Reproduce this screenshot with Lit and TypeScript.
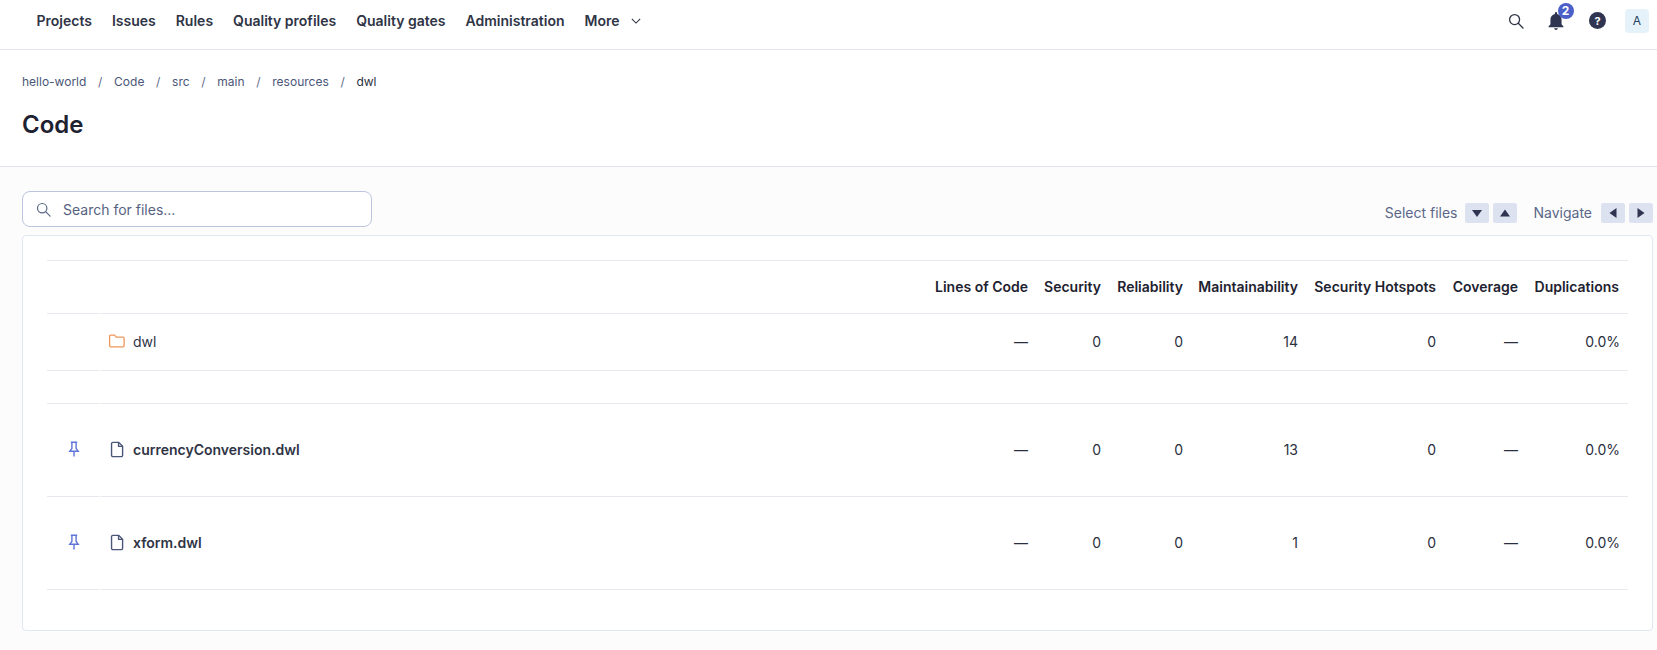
import { LitElement, html, css, svg } from "lit";
import { customElement } from "lit/decorators.js";

const COLS = ["Lines of Code", "Security", "Reliability", "Maintainability", "Security Hotspots", "Coverage", "Duplications"];

const pin = svg`<svg class="ico" width="16" height="16" viewBox="0 0 16 16" fill="none" stroke="#5f74d8" stroke-width="1.400"><path d="M4.800 1.200h6.400M5.900 1.200v6.200L3.800 10.200h8.400L10.100 7.400V1.200M8 10.200V15.500"/></svg>`;
const file = svg`<svg class="ico" width="17" height="17" viewBox="0 0 16 16" fill="none" stroke="#4a5678" stroke-width="1.300" stroke-linejoin="round"><path d="M3.600 1.300h5.600l3.600 3.600v8.600a1.200 1.200 0 0 1-1.200 1.200H3.600a1.200 1.200 0 0 1-1.200-1.200V2.500a1.200 1.200 0 0 1 1.200-1.200Z"/><path d="M9 1.400v3.700h3.700"/></svg>`;
const folder = svg`<svg class="ico" width="18" height="16" viewBox="0 0 18 16" fill="none" stroke="#f0965a" stroke-width="1.300" stroke-linejoin="round"><path d="M1.600 3.200a1 1 0 0 1 1-1h4l1.600 2h6.900a1 1 0 0 1 1 1v7.600a1 1 0 0 1-1 1H2.600a1 1 0 0 1-1-1Z"/></svg>`;
const search = (c: string, w = 15) => svg`<svg width="${w}" height="${w}" viewBox="0 0 16 16" fill="none" stroke="${c}" stroke-width="1.300" stroke-linecap="round"><circle cx="6.600" cy="6.600" r="5"/><path d="M10.300 10.300 15 15"/></svg>`;
const tri = (d: string) => svg`<svg width="12" height="12" viewBox="0 0 12 12" fill="#2f3550"><path d="${d}"/></svg>`;

@customElement("app-root")
export class AppRoot extends LitElement {
  static styles = css`
    :host { display: block; font-family: Inter, "Liberation Sans", sans-serif; font-size: 14px; color: #2a2f40; background: #fcfcfd; height: 650px; overflow: hidden; }
    .nav { background: #fff; border-bottom: 1px solid #e4e5f2; display: flex; align-items: center; padding: 0 8px 8px 36.5px; box-sizing: content-box; height: 41px; }
    .links { display: flex; gap: 20px; font-weight: 600; color: #2f3445; align-items: center; }
    .more { display: flex; align-items: center; gap: 11px; }
    .right { margin-left: auto; display: flex; align-items: center; }
    .nicon { display: flex; align-items: center; justify-content: center; position: relative; }
    .n1 { margin-right: 23px; }
    .n2 { margin-right: 24px; }
    .n3 { margin-right: 19px; }
    .badge { position: absolute; left: 10.5px; top: -8px; width: 16px; height: 16px; border-radius: 50%; background: #4b5fc8; color: #fff; font-size: 12px; font-weight: 700; display: flex; align-items: center; justify-content: center; }
    .avatar { width: 24px; height: 24px; border-radius: 4px; background: #e6f2fa; color: #23415e; font-size: 12px; display: flex; align-items: center; justify-content: center; }
    .head { background: #fff; border-bottom: 1px solid #e1e3ea; padding: 24px 22px 0; height: 117px; box-sizing: border-box; }
    .crumbs { display: flex; font-size: 12px; line-height: 16px; gap: 11.7px; color: #4a5678; }
    .crumbs .sep { color: #626d8a; }
    .crumbs .last { color: #2a2f40; }
    h1 { margin: 17px 0 0; font-size: 24px; line-height: 36px; font-weight: 600; color: #1e2230; }
    .body { padding: 24px 4px 0 22px; }
    .tools { display: flex; justify-content: space-between; align-items: flex-end; height: 36px; margin-bottom: 8px; }
    .search { width: 350px; height: 36px; box-sizing: border-box; border: 1px solid #bcc5de; border-radius: 8px; background: #fff; display: flex; align-items: center; gap: 12px; padding-left: 13px; color: #56627f; }
    .search svg { display: block; }
    .keys { display: flex; align-items: center; color: #5a6788; margin-bottom: 4px; }
    .lbl { line-height: 18px; margin-top: -1px; }
    .key { width: 24px; height: 20px; background: #dde2f0; border-radius: 2px; display: flex; align-items: center; justify-content: center; margin-left: 4px; }
    .k1 { margin-left: 8px; }
    .lbl2 { margin-left: 16px; }
    .k3 { margin-left: 9px; }
    .card { height: 396px; box-sizing: border-box; background: #fff; border: 1px solid #e1e6f3; border-radius: 4px; padding: 24px 24px 0; }
    .row { display: grid; grid-template-columns: 53px 1fr 100px 73px 82px 115px 138px 82px 102px; align-items: stretch; }
    .cell { box-sizing: border-box; border-bottom: 1px solid #e8e9ee; display: flex; align-items: center; justify-content: flex-end; padding: 0 8px 2px; min-width: 0; }
    .hdr .cell:last-child { padding-right: 9px; }
    .cell.p { margin-right: 1px; padding: 0 0 2px 19px; justify-content: flex-start; }
    .cell.n { justify-content: flex-start; padding: 0 0 2px 9px; gap: 7px; font-weight: 600; color: #2f3445; }
    .cell.n.plain { font-weight: 400; gap: 7px; padding-left: 8px; }
    .hdr { border-top: 1px solid #e8e9ee; }
    .hdr .cell { height: 53px; font-weight: 600; color: #1e2230; white-space: nowrap; }
    .r1 .cell { height: 57px; }
    .r2 .cell { height: 33px; }
    .r3 .cell { height: 93px; }
    .ico { display: block; flex: none; }
    .v { color: #2a2f40; }
  `;

  private row(cls: string, icon: unknown, name: string, vals: string[], p: unknown = "", plain = false) {
    return html`<div class="row ${cls}">
      <div class="cell p">${p}</div>
      <div class="cell n ${plain ? "plain" : ""}">${icon}<span>${name}</span></div>
      ${vals.map((v) => html`<div class="cell v">${v}</div>`)}
    </div>`;
  }

  render() {
    return html`
      <div class="nav">
        <div class="links">
          <span>Projects</span><span>Issues</span><span>Rules</span><span>Quality profiles</span><span>Quality gates</span><span>Administration</span>
          <span class="more">More <svg width="10" height="10" viewBox="0 0 12 12" fill="none" stroke="#2f3445" stroke-width="1.300"><path d="M1 3.500 6 8.500 11 3.500"/></svg></span>
        </div>
        <div class="right">
          <span class="nicon n1">${search("#2f3445", 16)}</span>
          <span class="nicon n2"><svg width="18" height="20" viewBox="0 0 16 18" fill="#2f3550"><path d="M8 1a1 1 0 0 1 1 1v.6c2.400.5 4 2.500 4 5V12l1.700 2v.6H1.300V14L3 12V7.600c0-2.500 1.600-4.500 4-5V2a1 1 0 0 1 1-1ZM6.300 15.500h3.400A1.700 1.700 0 0 1 8 17a1.700 1.700 0 0 1-1.700-1.500Z"/></svg><span class="badge">2</span></span>
          <span class="nicon n3"><svg width="17" height="17" viewBox="0 0 17 17"><circle cx="8.500" cy="8.500" r="8.500" fill="#2f3550"/><text x="8.500" y="12.500" text-anchor="middle" font-size="11" font-weight="700" fill="#fff" font-family="Inter">?</text></svg></span>
          <span class="avatar">A</span>
        </div>
      </div>
      <div class="head">
        <div class="crumbs">
          <span>hello-world</span><span class="sep">/</span><span>Code</span><span class="sep">/</span><span>src</span><span class="sep">/</span><span>main</span><span class="sep">/</span><span>resources</span><span class="sep">/</span><span class="last">dwl</span>
        </div>
        <h1>Code</h1>
      </div>
      <div class="body">
        <div class="tools">
          <div class="search">${search("#5a6788")}<span>Search for files...</span></div>
          <div class="keys">
            <span class="lbl">Select files</span>
            <span class="key k1">${tri("M1 3h10L6 10Z")}</span><span class="key">${tri("M1 9.500h10L6 2.500Z")}</span>
            <span class="lbl lbl2">Navigate</span>
            <span class="key k3">${tri("M9.500 1v10L2.500 6Z")}</span><span class="key">${tri("M2.500 1v10l7-5Z")}</span>
          </div>
        </div>
        <div class="card">
          <div class="row hdr">
            <div class="cell p"></div><div class="cell n"></div>
            ${COLS.map((c) => html`<div class="cell">${c}</div>`)}
          </div>
          ${this.row("r1", folder, "dwl", ["—", "0", "0", "14", "0", "—", "0.0%"], "", true)}
          <div class="row r2"><div class="cell p"></div><div class="cell n"></div>${COLS.map(() => html`<div class="cell"></div>`)}</div>
          ${this.row("r3", file, "currencyConversion.dwl", ["—", "0", "0", "13", "0", "—", "0.0%"], pin)}
          ${this.row("r3", file, "xform.dwl", ["—", "0", "0", "1", "0", "—", "0.0%"], pin)}
        </div>
      </div>
    `;
  }
}
